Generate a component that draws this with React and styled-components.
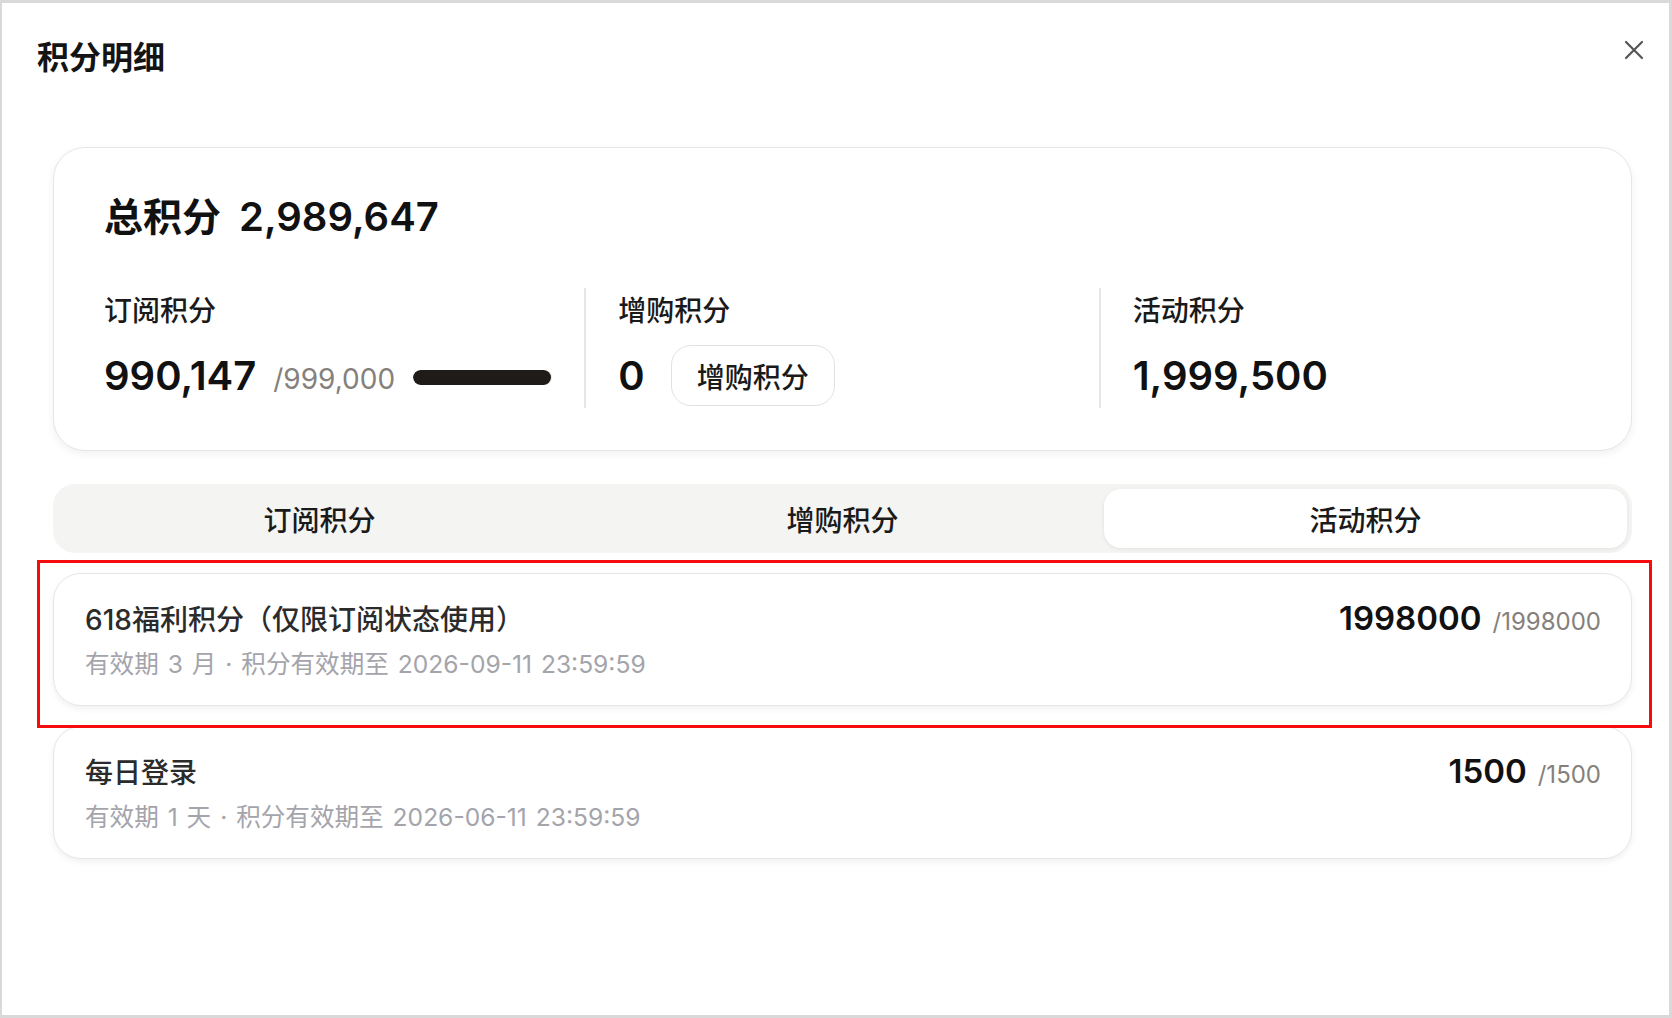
import React from "react";
import styled, { createGlobalStyle } from "styled-components";

const GlobalStyle = createGlobalStyle`
  html, body {
    margin: 0;
    padding: 0;
    background: #ffffff;
  }
  body {
    font-family: Inter, "Noto Sans CJK SC", sans-serif;
    color: #1a1a1a;
  }
  * {
    box-sizing: border-box;
  }
`;

const items = [
  {
    name: "618福利积分（仅限订阅状态使用）",
    meta: "有效期 3 月 · 积分有效期至 2026-09-11 23:59:59",
    left: "1998000",
    total: "/1998000",
    highlighted: true,
  },
  {
    name: "每日登录",
    meta: "有效期 1 天 · 积分有效期至 2026-06-11 23:59:59",
    left: "1500",
    total: "/1500",
  },
];

const tabs = ["订阅积分", "增购积分", "活动积分"];

function PointsDetail() {
  const activeTab = 2;

  return (
    <Frame>
      <Header>
        <Title>积分明细</Title>
        <CloseButton aria-label="close">
          <svg width="20" height="20" viewBox="0 0 20 20">
            <path
              d="M2 2 L18 18 M18 2 L2 18"
              stroke="#555"
              strokeWidth="2.2"
              strokeLinecap="round"
            />
          </svg>
        </CloseButton>
      </Header>

      <Content>
        <SummaryCard>
          <TotalLine>
            总积分<TotalNumber>2,989,647</TotalNumber>
          </TotalLine>
          <Stats>
            <Stat>
              <StatLabel>订阅积分</StatLabel>
              <StatRow>
                <StatValue>990,147</StatValue>
                <StatLimit>/999,000</StatLimit>
                <Progress>
                  <ProgressFill style={{ width: `${(990147 / 999000) * 100}%` }} />
                </Progress>
              </StatRow>
            </Stat>
            <Divider />
            <Stat>
              <StatLabel>增购积分</StatLabel>
              <StatRow>
                <StatValue>0</StatValue>
                <BuyButton>增购积分</BuyButton>
              </StatRow>
            </Stat>
            <Divider />
            <Stat>
              <StatLabel>活动积分</StatLabel>
              <StatRow>
                <StatValue>1,999,500</StatValue>
              </StatRow>
            </Stat>
          </Stats>
        </SummaryCard>

        <TabBar>
          {tabs.map((t, i) => (
            <Tab key={t} $active={i === activeTab}>
              {t}
            </Tab>
          ))}
        </TabBar>

        <List>
          {items.map((item) => (
            <ItemCard key={item.name}>
              {item.highlighted && <Highlight />}
              <ItemTop>
                <ItemName>{item.name}</ItemName>
                <ItemAmount>
                  {item.left}
                  <ItemTotal>{item.total}</ItemTotal>
                </ItemAmount>
              </ItemTop>
              <ItemMeta>{item.meta}</ItemMeta>
            </ItemCard>
          ))}
        </List>
      </Content>
    </Frame>
  );
}

const Frame = styled.div`
  width: 1672px;
  height: 1018px;
  border: 3px solid #d9d9d9;
  border-left-width: 2px;
  background: #ffffff;
  overflow: hidden;
`;

const Header = styled.div`
  display: flex;
  justify-content: space-between;
  align-items: flex-start;
  padding: 35px 25px 0 35px;
`;

const Title = styled.h1`
  margin: 0;
  font-size: 32px;
  line-height: 40px;
  font-weight: 700;
  color: #141414;
`;

const CloseButton = styled.button`
  display: flex;
  margin-top: 2px;
  padding: 0;
  border: none;
  background: transparent;
  cursor: pointer;
`;

const Content = styled.div`
  padding: 0 37px 0 51px;
`;

const SummaryCard = styled.section`
  margin-top: 69px;
  border: 1.5px solid #e6e6e6;
  border-radius: 32px;
  padding: 45px 50px 42px;
  background: #ffffff;
  box-shadow: 0 3px 8px rgba(0, 0, 0, 0.06);
`;

const TotalLine = styled.div`
  display: flex;
  align-items: baseline;
  font-size: 39px;
  line-height: 48px;
  font-weight: 700;
  color: #111;
`;

const TotalNumber = styled.span`
  margin-left: 18px;
  font-size: 40px;
  font-weight: 600;
`;

const Stats = styled.div`
  display: grid;
  grid-template-columns: 1fr 2px 1fr 2px 1fr;
  column-gap: 32px;
  margin-top: 47px;
`;

const Divider = styled.div`
  background: #e6e6e6;
`;

const Stat = styled.div`
  display: flex;
  flex-direction: column;
  min-width: 0;
`;

const StatLabel = styled.div`
  font-size: 28px;
  line-height: 42px;
  font-weight: 500;
  color: #1a1a1a;
  margin-top: 2px;
  margin-bottom: 13px;
`;

const StatRow = styled.div`
  display: flex;
  align-items: center;
  height: 61px;
  margin-bottom: 2px;
`;

const StatValue = styled.span`
  font-size: 40px;
  font-weight: 600;
  color: #111;
`;

const StatLimit = styled.span`
  margin-left: 17px;
  margin-top: 6px;
  font-size: 28px;
  color: #85807b;
`;

const Progress = styled.div`
  flex: 1;
  height: 15px;
  margin-left: 18px;
  margin-top: 4px;
  border-radius: 8px;
  background: #ece9e6;
  overflow: hidden;
`;

const ProgressFill = styled.div`
  height: 100%;
  border-radius: 8px;
  background: #1f1b19;
`;

const BuyButton = styled.button`
  height: 61px;
  margin-left: 26px;
  padding: 0 25px;
  border: 1.5px solid #e2e2e2;
  border-radius: 20px;
  background: #ffffff;
  font-family: inherit;
  font-size: 28px;
  font-weight: 500;
  color: #1a1a1a;
  cursor: pointer;
`;

const TabBar = styled.div`
  display: grid;
  grid-template-columns: repeat(3, 1fr);
  margin-top: 33px;
  padding: 5px;
  border-radius: 22px;
  background: #f4f4f3;
`;

const Tab = styled.div`
  display: flex;
  align-items: center;
  justify-content: center;
  height: 59px;
  border-radius: 17px;
  font-size: 28px;
  font-weight: 500;
  color: #1a1a1a;
  background: ${(p) => (p.$active ? "#ffffff" : "transparent")};
  box-shadow: ${(p) => (p.$active ? "0 1px 4px rgba(0, 0, 0, 0.08)" : "none")};
`;

const List = styled.div`
  display: flex;
  flex-direction: column;
  gap: 20px;
  margin-top: 20px;
`;

const ItemCard = styled.div`
  position: relative;
  padding: 27px 30px 26px 31px;
  border: 1.5px solid #e6e6e6;
  border-radius: 28px;
  background: #ffffff;
  box-shadow: 0 3px 6px rgba(0, 0, 0, 0.06);
`;

const Highlight = styled.div`
  position: absolute;
  top: -14.5px;
  left: -17.5px;
  right: -20.5px;
  bottom: -22.5px;
  border: 3px solid #f50c0c;
  pointer-events: none;
  z-index: 2;
`;

const ItemTop = styled.div`
  display: flex;
  justify-content: space-between;
  align-items: baseline;
`;

const ItemName = styled.div`
  font-size: 28px;
  line-height: 34px;
  font-weight: 500;
  color: #2b2b2b;
`;

const ItemAmount = styled.div`
  font-size: 33px;
  line-height: 34px;
  font-weight: 600;
  color: #111;
`;

const ItemTotal = styled.span`
  margin-left: 11px;
  font-size: 24px;
  font-weight: 400;
  color: #85807b;
`;

const ItemMeta = styled.div`
  margin-top: 10px;
  font-size: 24.6px;
  line-height: 30px;
  word-spacing: 2px;
  color: #a4a4ab;
`;

export default function App() {
  return (
    <>
      <GlobalStyle />
      <PointsDetail />
    </>
  );
}
